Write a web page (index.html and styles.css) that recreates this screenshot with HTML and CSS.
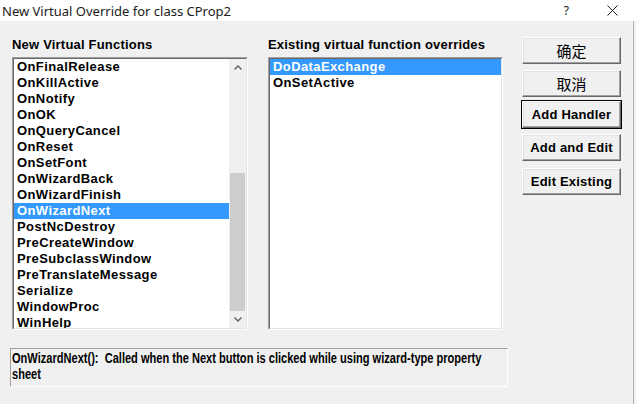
FILE: index.html
```html
<!DOCTYPE html>
<html>
<head>
  <title>New Virtual Override</title>
  <link rel="stylesheet" href="styles.css">
</head>
<body>
  <div class="titlebar">
    <span class="title">New Virtual Override for class CProp2</span>
    <span class="help">?</span>
    <svg class="close" width="11" height="11" viewBox="0 0 11 11">
      <path d="M0.5 0.5 L10.5 10.5 M10.5 0.5 L0.5 10.5" stroke="#1a1a1a" stroke-width="1" fill="none"/>
    </svg>
  </div>
  <div class="dialog">
    <div class="top">
      <div class="pane pane-left">
        <div class="label">New Virtual Functions</div>
        <div class="listbox">
          <div class="listbox-inner">
            <ul class="items">
              <li>OnFinalRelease</li>
              <li>OnKillActive</li>
              <li>OnNotify</li>
              <li>OnOK</li>
              <li>OnQueryCancel</li>
              <li>OnReset</li>
              <li>OnSetFont</li>
              <li>OnWizardBack</li>
              <li>OnWizardFinish</li>
              <li class="selected">OnWizardNext</li>
              <li>PostNcDestroy</li>
              <li>PreCreateWindow</li>
              <li>PreSubclassWindow</li>
              <li>PreTranslateMessage</li>
              <li>Serialize</li>
              <li>WindowProc</li>
              <li>WinHelp</li>
            </ul>
            <div class="scrollbar">
              <div class="arrow">
                <svg width="8" height="5" viewBox="0 0 8 5"><polyline points="0.5,4.5 4,1 7.5,4.5" stroke="#606060" stroke-width="1.4" fill="none"/></svg>
              </div>
              <div class="track"><div class="thumb"></div></div>
              <div class="arrow">
                <svg width="8" height="5" viewBox="0 0 8 5"><polyline points="0.5,0.5 4,4 7.5,0.5" stroke="#606060" stroke-width="1.4" fill="none"/></svg>
              </div>
            </div>
          </div>
        </div>
      </div>
      <div class="pane pane-right">
        <div class="label">Existing virtual function overrides</div>
        <div class="listbox">
          <div class="listbox-inner">
            <ul class="items">
              <li class="selected">DoDataExchange</li>
              <li>OnSetActive</li>
            </ul>
          </div>
        </div>
      </div>
      <div class="buttons">
        <button class="btn btn-cjk">确定</button>
        <button class="btn btn-cjk">取消</button>
        <button class="btn btn-default">Add Handler</button>
        <button class="btn">Add and Edit</button>
        <button class="btn btn-last">Edit Existing</button>
      </div>
    </div>
    <div class="description">
      <span class="description-text">OnWizardNext():  Called when the Next button is clicked while using wizard-type property sheet</span>
    </div>
  </div>
</body>
</html>
```

FILE: styles.css
```css
body {
  margin: 0;
  width: 636px;
  height: 404px;
  overflow: hidden;
  background: #f0f0f0;
  font-family: "Liberation Sans", Arial, sans-serif;
}
.titlebar {
  display: flex;
  align-items: center;
  height: 21px;
  background: #fff;
}
.title {
  padding-left: 2px;
  font-family: "Noto Sans", sans-serif;
  font-size: 13px;
  color: #1a1a1a;
}
.help {
  margin-left: auto;
  margin-right: 38px;
  font-family: "Noto Sans", sans-serif;
  font-size: 12px;
  color: #1a1a1a;
}
.close {
  margin-right: 18px;
}
.dialog {
  box-sizing: border-box;
  width: 634px;
  height: 383px;
  padding: 16px 0 0 12px;
  border-right: 1px solid #b4b4b4;
}
.top {
  display: flex;
  align-items: flex-start;
}
.pane-left {
  width: 236px;
  margin-right: 20px;
}
.pane-right {
  width: 235px;
  margin-right: 19px;
}
.label {
  height: 16px;
  line-height: 16px;
  margin-bottom: 4px;
  font-size: 13px;
  font-weight: bold;
  letter-spacing: 0.2px;
  white-space: nowrap;
}
.listbox {
  box-sizing: border-box;
  height: 273px;
  border: 1px solid;
  border-color: #a0a0a0 #fff #fff #a0a0a0;
}
.listbox-inner {
  display: flex;
  height: 100%;
  box-sizing: border-box;
  border: 1px solid;
  border-color: #696969 #e3e3e3 #e3e3e3 #696969;
  background: #fff;
  overflow: hidden;
}
.items {
  flex: 1;
  list-style: none;
  margin: 0;
  padding: 0;
}
.items li {
  height: 16px;
  line-height: 16px;
  padding-left: 3px;
  font-size: 13px;
  font-weight: bold;
  letter-spacing: 0.4px;
  white-space: nowrap;
}
.items .selected {
  background: #3399ff;
  color: #fff;
}
.scrollbar {
  display: flex;
  flex-direction: column;
  width: 17px;
  background: #f0f0f0;
}
.arrow {
  display: flex;
  align-items: center;
  justify-content: center;
  height: 17px;
}
.track {
  flex: 1;
  display: flex;
  flex-direction: column;
  justify-content: flex-end;
}
.thumb {
  height: 138px;
  margin: 0 1px;
  background: #cdcdcd;
}
.buttons {
  display: flex;
  flex-direction: column;
  gap: 6px;
  width: 99px;
}
.btn {
  box-sizing: border-box;
  height: 27px;
  padding: 0;
  background: #f0f0f0;
  border: 1px solid;
  border-color: #fff #696969 #696969 #fff;
  box-shadow: inset -1px -1px #a0a0a0, inset 1px 1px #e3e3e3;
  font-family: "Liberation Sans", Arial, sans-serif;
  font-size: 13px;
  font-weight: bold;
  letter-spacing: 0.2px;
  color: #000;
}
.btn-cjk {
  font-family: "Noto Sans CJK SC", sans-serif;
  font-size: 15px;
  font-weight: normal;
  letter-spacing: 0;
}
.btn-default {
  margin-top: -2px;
  outline: 1px solid #000;
  outline-offset: 0;
}
.btn-last {
  margin-top: 1px;
}
.description {
  box-sizing: border-box;
  width: 498px;
  height: 39px;
  margin: 18px 0 0 -2px;
  padding: 1px 0 0 1px;
  border: 1px solid;
  border-color: #a0a0a0 #fff #fff #a0a0a0;
  overflow: hidden;
}
.description-text {
  display: block;
  width: 610px;
  transform: scaleX(0.79);
  transform-origin: left top;
  font-size: 14px;
  font-weight: bold;
  line-height: 16px;
  white-space: pre-wrap;
}
```
